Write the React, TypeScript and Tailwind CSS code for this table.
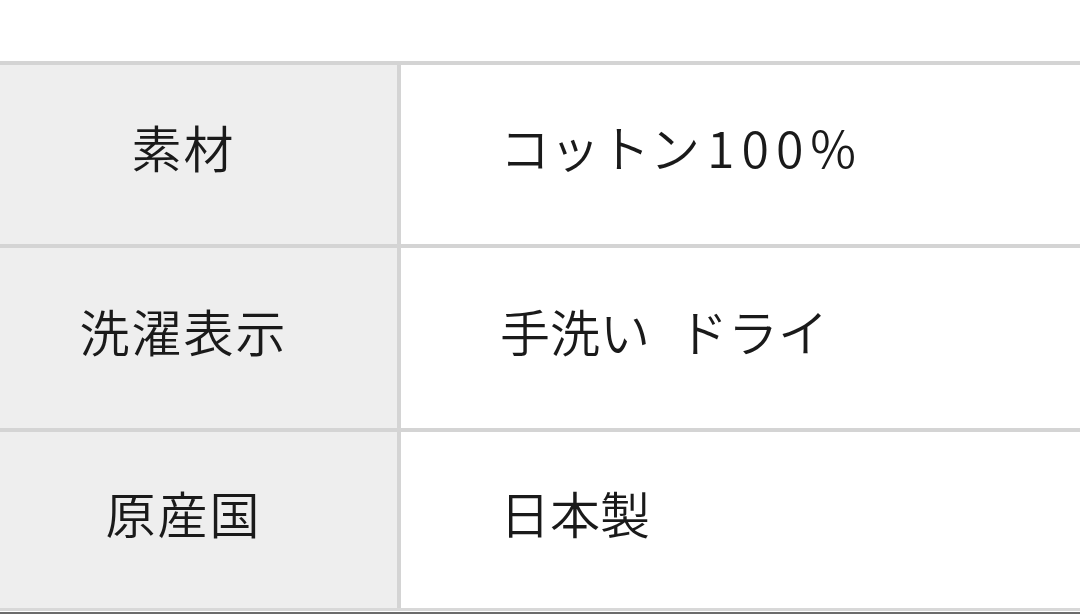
import React from "react";

const rows: { label: string; value: React.ReactNode; h: string }[] = [
  {
    label: "素材",
    value: (
      <>
        コットン<span className="tracking-[7px] ml-[7px]">100%</span>
      </>
    ),
    h: "h-[179px]",
  },
  {
    label: "洗濯表示",
    value: (
      <>
        手洗い<span className="ml-[28px]">ドライ</span>
      </>
    ),
    h: "h-[180px]",
  },
  { label: "原産国", value: "日本製", h: "h-[176px]" },
];

export default function App() {
  return (
    <div
      className="w-[1080px] h-[614px] bg-white overflow-hidden flex flex-col"
      style={{ fontFamily: '"Noto Sans CJK JP", "Noto Sans", sans-serif' }}
    >
      <div className="h-[61px] shrink-0" />
      <div className="h-[4px] bg-[#d4d4d4] shrink-0" />
      {rows.map((r, i) => (
        <React.Fragment key={r.label}>
          <div className={`flex ${r.h} shrink-0`}>
            <div className="w-[397px] bg-[#eeeeee] flex items-center justify-center pr-[30px] pb-[17px] text-[50px] leading-none tracking-[2px] font-[350] text-[#1a1a1a]">
              {r.label}
            </div>
            <div className="w-[4px] bg-[#d4d4d4]" />
            <div className="flex-1 flex items-center pl-[99px] pb-[17px] text-[50px] leading-none font-[350] text-[#1a1a1a]">
              {r.value}
            </div>
          </div>
          {i < rows.length - 1 ? (
            <div className="h-[4px] bg-[#d4d4d4] shrink-0" />
          ) : (
            <>
              <div className="h-[3px] bg-[#d8d8d8] shrink-0" />
              <div className="h-[1px] bg-white shrink-0" />
              <div className="h-[2px] bg-[#6b6b6b] shrink-0" />
            </>
          )}
        </React.Fragment>
      ))}
    </div>
  );
}
